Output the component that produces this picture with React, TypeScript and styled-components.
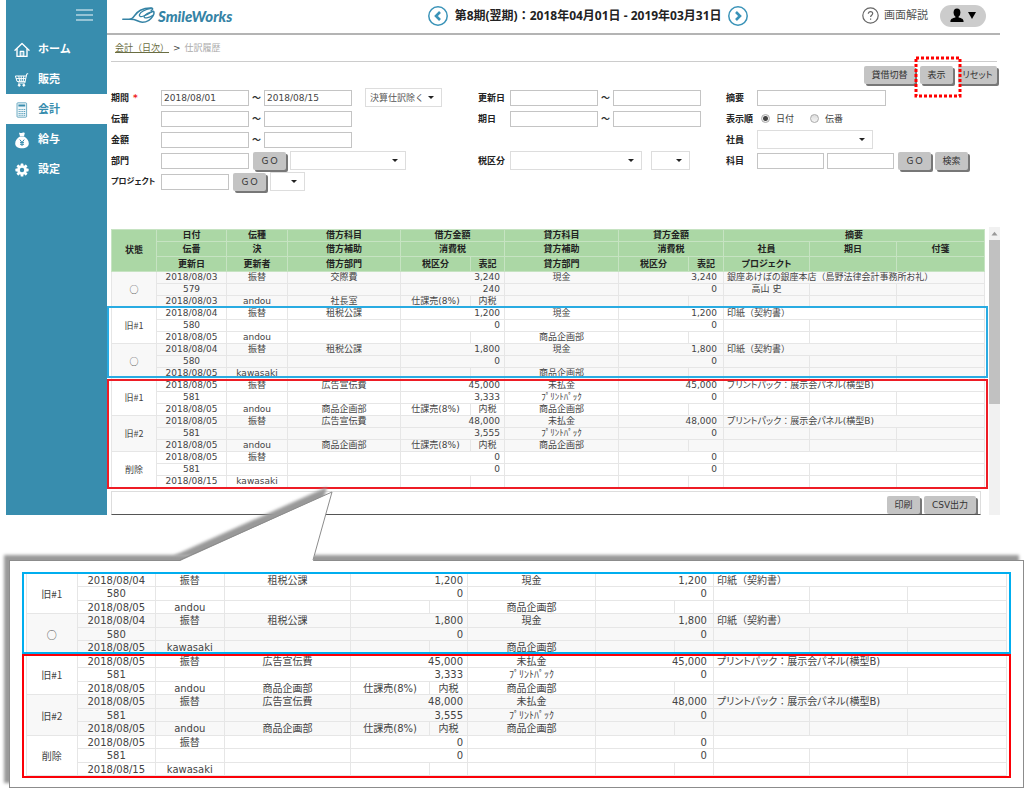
import React from "react";
import styled, { createGlobalStyle, css } from "styled-components";

const BLUE = "#388dae";

const GlobalStyle = createGlobalStyle`
  *, *::before, *::after { box-sizing: border-box; }
  body {
    margin: 0;
    background: #fff;
    color: #333;
    font: 9px/12px "DejaVu Sans", "Noto Sans CJK JP", sans-serif;
  }
  button, input, select { font: inherit; color: inherit; margin: 0; }
`;

const Page = styled.div`
  overflow: hidden;
`;

const Shell = styled.div`
  display: flex;
  margin: 0 24px 0 6px;
`;

/* ---------- side navigation ---------- */

const Sidebar = styled.nav`
  flex: none;
  width: 101px;
  background: ${BLUE};
`;

const MenuButton = styled.button`
  display: block;
  margin: 0 14px 4px auto;
  padding: 8px 0 6px;
  height: 30px;
  border: 0;
  background: none;
  cursor: pointer;
`;

const NavLink = styled.a<{ $active?: boolean }>`
  display: flex;
  align-items: center;
  gap: 8px;
  height: 30px;
  padding: 2px 0 0 8px;
  font-size: 11px;
  font-weight: bold;
  text-decoration: none;
  color: ${(p) => (p.$active ? BLUE : "#fff")};
  background: ${(p) => (p.$active ? "#fff" : "transparent")};
  svg { flex: none; }
`;

/* ---------- header ---------- */

const Main = styled.main`
  flex: 1;
  min-width: 0;
`;

const Header = styled.header`
  display: grid;
  grid-template-columns: 305fr auto 237fr;
  align-items: center;
  height: 35px;
  padding: 0 14px 2px 15px;
  border-bottom: 2px solid #b4b4b4;
`;

const Logo = styled.a`
  display: flex;
  align-items: center;
  gap: 3px;
  color: #3583a5;
  font: italic 900 15px/20px Lato, sans-serif;
  text-decoration: none;
`;

const Period = styled.div`
  display: flex;
  align-items: center;
  justify-content: space-between;
  width: 320px;
  font: bold 12px/20px "Noto Sans", "Noto Sans CJK JP", sans-serif;
  color: #222;
  white-space: nowrap;
`;

const RoundButton = styled.button`
  display: flex;
  padding: 0;
  border: 0;
  background: none;
  cursor: pointer;
`;

const HeaderTools = styled.div`
  display: flex;
  align-items: center;
  justify-content: flex-end;
  gap: 12px;
`;

const HelpLink = styled.a`
  display: flex;
  align-items: center;
  gap: 5px;
  font-size: 11px;
  color: #555;
  text-decoration: none;
`;

const UserButton = styled.button`
  display: flex;
  align-items: center;
  justify-content: center;
  gap: 4px;
  width: 46px;
  height: 22px;
  padding: 0;
  border: 0;
  border-radius: 11px;
  background: #ccc;
`;

const Content = styled.div`
  padding-left: 4px;
`;

const Breadcrumb = styled.div`
  display: flex;
  align-items: center;
  gap: 4px;
  height: 27px;
  margin-right: 3px;
  padding-left: 1px;
  border-bottom: 1px solid #ccc;
  color: #aaa;
  a { color: #6a6d42; padding-left: 3px; }
  span { color: #444; }
`;

/* ---------- controls ---------- */

const Button = styled.button<{ $w?: number }>`
  position: relative;
  width: ${(p) => p.$w ?? 33}px;
  height: 18px;
  padding: 0;
  flex: none;
  border: 0;
  border-radius: 2px;
  background: #c4c4c4;
  box-shadow: 2px 2px 0 #777;
  color: #333;
  white-space: nowrap;
  cursor: pointer;
`;

const Kana = styled.span`
  font-feature-settings: "palt";
`;

const Toolbar = styled.div`
  display: flex;
  justify-content: flex-end;
  gap: 5px;
  height: 25px;
  padding: 4px 3px 0 0;
`;

const FocusMark = styled.svg`
  position: absolute;
  left: -6px;
  top: -10px;
  z-index: 2;
  pointer-events: none;
`;

const Form = styled.form`
  display: grid;
  grid-template-columns: 367fr 248fr 258fr;
  margin-right: 16px;
`;

const FormColumn = styled.div<{ $label: number }>`
  label:first-child, strong { flex: none; width: ${(p) => p.$label}px; }
`;

const FormRow = styled.div`
  display: flex;
  align-items: center;
  height: 21px;
  white-space: nowrap;
`;

const labelText = css`
  font-weight: bold;
  color: #222;
  i { color: #e22; font-style: normal; margin-left: 4px; }
`;

const Label = styled.label<{ $small?: boolean }>`
  ${labelText}
  font-size: ${(p) => (p.$small ? 8 : 9)}px;
`;
const GroupLabel = styled.strong`${labelText}`;

const TextBox = styled.input<{ $w: number }>`
  width: ${(p) => p.$w}px;
  height: 16px;
  padding: 0 2px;
  border: 1px solid #c4c4c4;
  border-radius: 0;
  background: #fff;
  color: #444;
  flex: none;
`;

const Tilde = styled.span`
  flex: none;
  width: 15px;
  text-align: center;
  font-weight: bold;
`;

const SelectWrap = styled.span<{ $w: number; $gap?: number }>`
  position: relative;
  flex: none;
  width: ${(p) => p.$w}px;
  height: 19px;
  margin-left: ${(p) => p.$gap ?? 0}px;
  &::after {
    content: "";
    position: absolute;
    right: 8px;
    top: 8px;
    border: 3px solid transparent;
    border-top-color: #222;
    border-bottom: 0;
    pointer-events: none;
  }
  select {
    display: block;
    width: 100%;
    height: 100%;
    padding: 0 4px;
    border: 1px solid #ddd;
    border-radius: 0;
    background: #fff;
    color: #555;
    appearance: none;
  }
`;

const ButtonSlot = styled.span`
  display: flex;
  margin: 0 4px;
`;

const AccountFields = styled.span`
  display: flex;
  gap: 3px;
`;

const Choice = styled.label`
  display: flex;
  align-items: center;
  gap: 6px;
  margin: 0 12px 0 4px;
  color: #444;
  input {
    appearance: none;
    width: 9px;
    height: 9px;
    border: 1px solid #aaa;
    border-radius: 50%;
    background: linear-gradient(#ddd, #f4f4f4);
  }
  input:checked {
    background: radial-gradient(circle, #444 0 2px, #eee 3px);
  }
`;

/* ---------- journal table ---------- */

const ListArea = styled.div`
  display: flex;
  gap: 5px;
  margin-top: 35px;
`;

const ListColumn = styled.div`
  flex: 1;
  min-width: 0;
  padding-top: 2px;
`;

const TableFrame = styled.div`
  position: relative;
`;

const Table = styled.table<{ $large?: boolean }>`
  width: 100%;
  table-layout: fixed;
  border-collapse: collapse;
  font-size: ${(p) => (p.$large ? 10 : 9)}px;
  line-height: 11px;
  color: #444;
  text-align: center;
  white-space: nowrap;
  th, td { padding: 0; border: 1px solid #e6e6e6; overflow: hidden; }
  thead { background: #abd7a5; color: #222; }
  thead th { border-color: #c6e3c2; }
  thead tr { height: 15px; }
  thead tr:first-child { height: 12px; }
  tbody tr { height: 12px; }
  ${(p) =>
    p.$large &&
    css`
      tbody tr { height: 13px; }
      tbody tr.tall { height: 14px; }
    `}
`;

const EntryRow = styled.tr<{ $shaded: boolean }>`
  background: ${(p) => (p.$shaded ? "#f8f8f8" : "#fff")};
`;

const State = styled.td`
  font-family: "Noto Sans CJK JP", sans-serif;
`;

const Amount = styled.td<{ $credit?: boolean }>`
  && { text-align: right; padding-right: ${(p) => (p.$credit ? 6 : 4)}px; }
`;

const Remark = styled.td`
  && { text-align: left; padding-left: 3px; }
`;

const Highlight = styled.div<{ $color: string; $top: number; $height: number }>`
  position: absolute;
  left: -4px;
  right: -4px;
  top: ${(p) => p.$top}px;
  height: ${(p) => p.$height}px;
  border: 2px solid ${(p) => p.$color};
  pointer-events: none;
`;

const ListFooter = styled.div`
  display: flex;
  justify-content: flex-end;
  gap: 4px;
  height: 24px;
  margin: 3px 3px 0 0;
  padding: 4px 4px 0 0;
  overflow: hidden;
  border: 1px solid #ddd;
  border-bottom-color: #555;
`;

const ScrollTrack = styled.div`
  width: 11px;
  padding-top: 4px;
  background: #f1f1f1;
  svg { display: block; margin: 0 auto 4px; }
`;

const ScrollThumb = styled.div`
  height: 164px;
  background: #c1c1c1;
`;

/* ---------- enlarged callout ---------- */

const Callout = styled.section`
  position: relative;
  margin: 45px 0 0 9px;
  padding: 12px 16px 11px;
  border: 1px solid #8c8c8c;
  background: #fff;
  box-shadow: -5px -5px 3px #999;
`;

const CalloutTail = styled.svg`
  position: absolute;
  left: 145px;
  top: -76px;
`;

type Entry = {
  state: string;
  dates: [string, string, string];
  kind: string;
  user: string;
  debit: [string, string, string];
  debitAmount: string;
  debitTax: string;
  taxClass: string;
  taxNote: string;
  credit: [string, string, string];
  creditAmount: string;
  creditTax: string;
  remark: string;
  staff?: string;
};

const none: [string, string, string] = ["", "", ""];
const printPack = {
  taxClass: "仕課売(8%)",
  taxNote: "内税",
  debit: ["広告宣伝費", "", "商品企画部"] as [string, string, string],
  credit: ["未払金", "ﾌﾟﾘﾝﾄﾊﾟｯｸ", "商品企画部"] as [string, string, string],
  creditTax: "0",
  remark: "プリントパック：展示会パネル(横型B)",
  kind: "振替",
  user: "andou",
};
const stamp = {
  kind: "振替",
  debit: ["租税公課", "", ""] as [string, string, string],
  debitTax: "0",
  taxClass: "",
  taxNote: "",
  credit: ["現金", "", "商品企画部"] as [string, string, string],
  creditTax: "0",
  remark: "印紙（契約書）",
};

const entries: Entry[] = [
  {
    state: "○", dates: ["2018/08/03", "579", "2018/08/03"], kind: "振替", user: "andou",
    debit: ["交際費", "", "社長室"], debitAmount: "3,240", debitTax: "240",
    taxClass: "仕課売(8%)", taxNote: "内税", credit: ["現金", "", ""],
    creditAmount: "3,240", creditTax: "0",
    remark: "銀座あけぼの銀座本店（島野法律会計事務所お礼）", staff: "高山 史",
  },
  { ...stamp, state: "旧#1", dates: ["2018/08/04", "580", "2018/08/05"], user: "andou", debitAmount: "1,200", creditAmount: "1,200" },
  { ...stamp, state: "○", dates: ["2018/08/04", "580", "2018/08/05"], user: "kawasaki", debitAmount: "1,800", creditAmount: "1,800" },
  { ...printPack, state: "旧#1", dates: ["2018/08/05", "581", "2018/08/05"], debitAmount: "45,000", debitTax: "3,333", creditAmount: "45,000" },
  { ...printPack, state: "旧#2", dates: ["2018/08/05", "581", "2018/08/05"], debitAmount: "48,000", debitTax: "3,555", creditAmount: "48,000" },
  {
    state: "削除", dates: ["2018/08/05", "581", "2018/08/15"], kind: "振替", user: "kawasaki",
    debit: none, debitAmount: "0", debitTax: "0", taxClass: "", taxNote: "",
    credit: none, creditAmount: "0", creditTax: "0", remark: "",
  },
];

const columns = [45, 70, 61, 113, 70, 34, 114, 70, 35, 86, 87, 88];

/* Kana runs use proportional widths; kanji and punctuation keep the full em. */
const kanaRuns = (text: string) =>
  text.split(/([ぁ-んァ-ヶー]+)/).map((part, i) => (i % 2 ? <Kana key={i}>{part}</Kana> : part));

function JournalTable({ rows, first, large }: { rows: Entry[]; first: number; large?: boolean }) {
  const tall = (n: number) => (n % 2 === 1 ? "tall" : undefined);
  return (
    <Table $large={large}>
      <colgroup>
        {columns.map((w, i) => <col key={i} width={w} />)}
      </colgroup>
      {!large && (
        <thead>
          <tr>
            <th rowSpan={3}>状態</th><th>日付</th><th>伝種</th><th>借方科目</th>
            <th colSpan={2}>借方金額</th><th>貸方科目</th><th colSpan={2}>貸方金額</th><th colSpan={3}>摘要</th>
          </tr>
          <tr>
            <th>伝番</th><th>決</th><th>借方補助</th><th colSpan={2}>消費税</th><th>貸方補助</th>
            <th colSpan={2}>消費税</th><th>社員</th><th>期日</th><th>付箋</th>
          </tr>
          <tr>
            <th>更新日</th><th>更新者</th><th>借方部門</th><th>税区分</th><th>表記</th><th>貸方部門</th>
            <th>税区分</th><th>表記</th><th><Kana>プロジェクト</Kana></th><th></th><th></th>
          </tr>
        </thead>
      )}
      <tbody>
        {rows.map((e, i) => {
          const shaded = (i + first) % 2 === 0;
          return (
            <React.Fragment key={i}>
              <EntryRow $shaded={shaded} className={tall(i * 3)}>
                <State rowSpan={3}>{e.state}</State>
                <td>{e.dates[0]}</td><td>{e.kind}</td><td>{e.debit[0]}</td>
                <Amount colSpan={2}>{e.debitAmount}</Amount>
                <td>{e.credit[0]}</td>
                <Amount $credit colSpan={2}>{e.creditAmount}</Amount>
                <Remark colSpan={3}>{kanaRuns(e.remark)}</Remark>
              </EntryRow>
              <EntryRow $shaded={shaded} className={tall(i * 3 + 1)}>
                <td>{e.dates[1]}</td><td></td><td>{e.debit[1]}</td>
                <Amount colSpan={2}>{e.debitTax}</Amount>
                <td>{e.credit[1]}</td>
                <Amount $credit colSpan={2}>{e.creditTax}</Amount>
                <td>{e.staff}</td><td></td><td></td>
              </EntryRow>
              <EntryRow $shaded={shaded} className={tall(i * 3 + 2)}>
                <td>{e.dates[2]}</td><td>{e.user}</td><td>{e.debit[2]}</td>
                <td>{e.taxClass}</td><td>{e.taxNote}</td><td>{e.credit[2]}</td>
                <td></td><td></td><td></td><td></td><td></td>
              </EntryRow>
            </React.Fragment>
          );
        })}
      </tbody>
    </Table>
  );
}

/* ---------- icons ---------- */

const HomeIcon = () => (
  <svg width="16" height="16" viewBox="0 0 16 16" fill="none" stroke="#fff" strokeWidth="1.4" strokeLinejoin="round" strokeLinecap="round">
    <path d="M1 8.2 8 1.6l7 6.6" />
    <path d="M3 7v7.4h10V7" />
    <path d="M6.2 14.2V9.4h3.6v4.8z" fill="#fff" fillOpacity=".35" strokeWidth="1.1" />
  </svg>
);
const CartIcon = () => (
  <svg width="16" height="16" viewBox="0 0 16 16" fill="none" stroke="#fff" strokeWidth="1">
    <path d="M14.2 1.8h-1.4L10.8 11H4" />
    <path d="M1.4 4h11M1.4 4l1.6 5.4h8.2M2 6.6h9.8M4.8 4l.8 5.4M7.2 4v5.4M9.8 4l-.6 5.4" />
    <circle cx="5.2" cy="13.2" r="1" fill="#fff" />
    <circle cx="9.8" cy="13.2" r="1" fill="#fff" />
  </svg>
);
const CalcIcon = () => (
  <svg width="16" height="16" viewBox="0 0 16 16" fill="none" stroke={BLUE}>
    <rect x="3" y=".8" width="9.6" height="14.4" rx=".8" strokeWidth=".7" fill="#eef6f9" />
    <path d="M4.4 3.5h6.8" strokeWidth="2" />
    <path d="M4.6 7.5h6.6M4.6 9.5h6.6M4.6 11.5h6.6M4.6 13.3h6.6" strokeWidth=".8" strokeDasharray="1.2 .6" />
  </svg>
);
const BagIcon = () => (
  <svg width="16" height="17" viewBox="0 0 16 17">
    <path d="M5 .8c1-.4 1.600.5 2.600.1S9.400.2 10.800.9L10 4.200H6z" fill="#fff" />
    <path d="M6 4.400h4c2.800 1.400 4.800 4 4.800 7 0 3-2.400 4.800-6.800 4.800S1.200 14.400 1.200 11.400c0-3 2-5.600 4.800-7z" fill="#fff" />
    <path d="M5.800 7.600 8 10.400l2.200-2.800M8 10.400V14M6 10.600h4M6 12.300h4" stroke={BLUE} strokeWidth="1" fill="none" />
  </svg>
);
const GearIcon = () => (
  <svg width="16" height="16" viewBox="0 0 16 16">
    {[0, 45, 90, 135].map((a) => (
      <rect key={a} x="6.600" y="1.400" width="2.800" height="13.200" rx=".6" fill="#fff" transform={`rotate(${a} 8 8)`} />
    ))}
    <circle cx="8" cy="8" r="4.800" fill="#fff" />
    <circle cx="8" cy="8" r="2.200" fill={BLUE} />
  </svg>
);
const LogoMark = () => (
  <svg width="33" height="17" viewBox="0 0 33 17" fill="none" stroke="#3583a5" strokeLinecap="round">
    <path d="M.8 12.300H8c3.400 0 5-6.400 10.400-9C21.800 1.600 26 .9 29.600 1.100c1.600.2 1.200 1.600-.4 2.400" strokeWidth="1.500" />
    <path d="M29.200 1.300c-5.600 1-10.800 3.700-11.800 6.400-.6 1.800 1.400 2.300 3.600 1.500 3.400-1.100 7.600-3.500 9.800-5" strokeWidth="1.200" />
    <path d="M31.400 4.300c-3.400.9-8 2.700-9.200 4.900-.6 1.400.8 1.900 2.600 1.600 2.600-.4 4.800-1.400 6.200-2.500" strokeWidth="1.200" />
    <path d="M31.600 4.500c.8 1.300.2 3-.6 4.300-2.200 3.700-6.400 6.400-10.600 6.400-3.800 0-5.400-2.200-8.600-2.700-1.300-.2-2.500-.2-3.800-.2" strokeWidth="1.500" />
  </svg>
);
const CircleArrow = ({ flip }: { flip?: boolean }) => (
  <svg width="20" height="20" viewBox="0 0 20 20" fill="none" stroke="#3a93b8">
    <circle cx="10" cy="10" r="9.200" strokeWidth="1.500" />
    <path d={flip ? "M8 6l4 4-4 4" : "M12 6l-4 4 4 4"} strokeWidth="2.600" />
  </svg>
);

const navItems = [
  { label: "ホーム", icon: <HomeIcon /> },
  { label: "販売", icon: <CartIcon /> },
  { label: "会計", icon: <CalcIcon />, active: true },
  { label: "給与", icon: <BagIcon /> },
  { label: "設定", icon: <GearIcon /> },
];

function Select({ id, w, gap, value, label }: { id: string; w: number; gap?: number; value?: string; label?: string }) {
  return (
    <SelectWrap $w={w} $gap={gap}>
      <select id={id} aria-label={label}><option>{value ?? ""}</option></select>
    </SelectWrap>
  );
}

function Range({ id, label, from, to }: { id: string; label: string; from?: string; to?: string }) {
  return (
    <>
      <TextBox id={id} $w={88} defaultValue={from} />
      <Tilde>～</Tilde>
      <TextBox aria-label={`${label} 終了`} $w={88} defaultValue={to} />
    </>
  );
}

export default function App() {
  return (
    <Page>
      <GlobalStyle />
      <Shell>
        <Sidebar>
          <MenuButton aria-label="メニュー">
            <svg width="17" height="14" viewBox="0 0 17 14" stroke="#b4d5e2" strokeWidth="1.500">
              <path d="M0 2h17M0 7h17M0 12h17" />
            </svg>
          </MenuButton>
          {navItems.map((n) => (
            <NavLink key={n.label} href="#" $active={n.active}>{n.icon}{n.label}</NavLink>
          ))}
        </Sidebar>
        <Main>
          <Header>
            <Logo href="#"><LogoMark />SmileWorks</Logo>
            <Period>
              <RoundButton aria-label="前期"><CircleArrow /></RoundButton>
              第8期(翌期)：2018年04月01日 - 2019年03月31日
              <RoundButton aria-label="次期"><CircleArrow flip /></RoundButton>
            </Period>
            <HeaderTools>
              <HelpLink href="#">
                <svg width="17" height="17" viewBox="0 0 17 17" fill="none" stroke="#666">
                  <circle cx="8.500" cy="8.500" r="7.700" strokeWidth="1.200" />
                  <path d="M6.300 6.800c0-3 4.400-2.800 4.400-.2 0 1.700-2.100 1.600-2.100 3.400M8.600 11.400v1.300" strokeWidth="1.200" />
                </svg>
                画面解説
              </HelpLink>
              <UserButton aria-label="ユーザー">
                <svg width="14" height="15" viewBox="0 0 14 15" fill="#000">
                  <ellipse cx="7" cy="4.600" rx="3.400" ry="4.200" />
                  <path d="M5.400 7h3.200v2.600c3 .7 5 1.300 5 4.400H.4c0-3.100 2-3.700 5-4.400z" />
                </svg>
                <svg width="8" height="7" viewBox="0 0 8 7"><path d="M0 0h8L4 7z" /></svg>
              </UserButton>
            </HeaderTools>
          </Header>
          <Content>
            <Breadcrumb><a href="#">会計（日次）</a><span>&gt;</span>仕訳履歴</Breadcrumb>
            <Toolbar>
              <Button $w={51}>貸借切替</Button>
              <Button>
                表示
                <FocusMark width="48" height="42" viewBox="0 0 48 42" fill="none" aria-hidden="true">
                  <rect x="2" y="2" width="44" height="38" stroke="#f00" strokeWidth="3" strokeDasharray="3 2" />
                </FocusMark>
              </Button>
              <Button $w={39}><Kana>リセット</Kana></Button>
            </Toolbar>
            <Form onSubmit={(e) => e.preventDefault()}>
              <FormColumn $label={50}>
                <FormRow>
                  <Label htmlFor="term">期間<i>*</i></Label>
                  <Range id="term" label="期間" from="2018/08/01" to="2018/08/15" />
                  <Select id="closing" label="決算仕訳" w={77} gap={13} value="決算仕訳除く" />
                </FormRow>
                <FormRow><Label htmlFor="slip">伝番</Label><Range id="slip" label="伝番" /></FormRow>
                <FormRow><Label htmlFor="amount">金額</Label><Range id="amount" label="金額" /></FormRow>
                <FormRow>
                  <Label htmlFor="dept">部門</Label>
                  <TextBox id="dept" $w={88} />
                  <ButtonSlot><Button>ＧＯ</Button></ButtonSlot>
                  <Select id="deptList" label="部門一覧" w={116} />
                </FormRow>
                <FormRow>
                  <Label $small htmlFor="project"><Kana>プロジェクト</Kana></Label>
                  <TextBox id="project" $w={68} />
                  <ButtonSlot><Button>ＧＯ</Button></ButtonSlot>
                  <Select id="projectList" label="プロジェクト一覧" w={35} />
                </FormRow>
              </FormColumn>
              <FormColumn $label={32}>
                <FormRow><Label htmlFor="updated">更新日</Label><Range id="updated" label="更新日" /></FormRow>
                <FormRow><Label htmlFor="due">期日</Label><Range id="due" label="期日" /></FormRow>
                <FormRow />
                <FormRow>
                  <Label htmlFor="tax">税区分</Label>
                  <Select id="tax" w={132} />
                  <Select id="taxNote" label="表記" w={39} gap={9} />
                </FormRow>
              </FormColumn>
              <FormColumn $label={31}>
                <FormRow><Label htmlFor="remark">摘要</Label><TextBox id="remark" $w={129} /></FormRow>
                <FormRow>
                  <GroupLabel>表示順</GroupLabel>
                  <Choice><input type="radio" name="order" defaultChecked />日付</Choice>
                  <Choice><input type="radio" name="order" />伝番</Choice>
                </FormRow>
                <FormRow><Label htmlFor="staff">社員</Label><Select id="staff" w={116} /></FormRow>
                <FormRow>
                  <Label htmlFor="account">科目</Label>
                  <AccountFields>
                    <TextBox id="account" $w={67} />
                    <TextBox aria-label="科目名" $w={67} />
                  </AccountFields>
                  <ButtonSlot><Button>ＧＯ</Button></ButtonSlot>
                  <Button>検索</Button>
                </FormRow>
              </FormColumn>
            </Form>
            <ListArea>
              <ListColumn>
                <TableFrame>
                  <JournalTable rows={entries} first={0} />
                  <Highlight $color="#29abe2" $top={77} $height={72} />
                  <Highlight $color="#ee1c25" $top={150} $height={110} />
                </TableFrame>
                <ListFooter>
                  <Button>印刷</Button>
                  <Button $w={52}>CSV出力</Button>
                </ListFooter>
              </ListColumn>
              <ScrollTrack>
                <svg width="7" height="5" viewBox="0 0 7 5" fill="#999"><path d="M.5 4.500 3.500.8l3 3.700z" /></svg>
                <ScrollThumb />
              </ScrollTrack>
            </ListArea>
          </Content>
        </Main>
      </Shell>
      <Callout>
        <CalloutTail width="185" height="76" viewBox="0 0 185 76" aria-hidden="true">
          <defs>
            <filter id="soft" x="-10%" y="-10%" width="120%" height="120%"><feGaussianBlur stdDeviation="1.500" /></filter>
          </defs>
          <path d="M18 71 172 2 153 71z" fill="#999" filter="url(#soft)" />
          <path d="M25 76 177 7 158 76z" fill="#fff" />
          <path d="M25 75 177 7 158 75" fill="none" stroke="#8c8c8c" strokeWidth="1" />
        </CalloutTail>
        <TableFrame>
          <JournalTable rows={entries.slice(1)} first={1} large />
          <Highlight $color="#00aeef" $top={-1} $height={82} />
          <Highlight $color="#fb0007" $top={81} $height={124} />
        </TableFrame>
      </Callout>
    </Page>
  );
}
